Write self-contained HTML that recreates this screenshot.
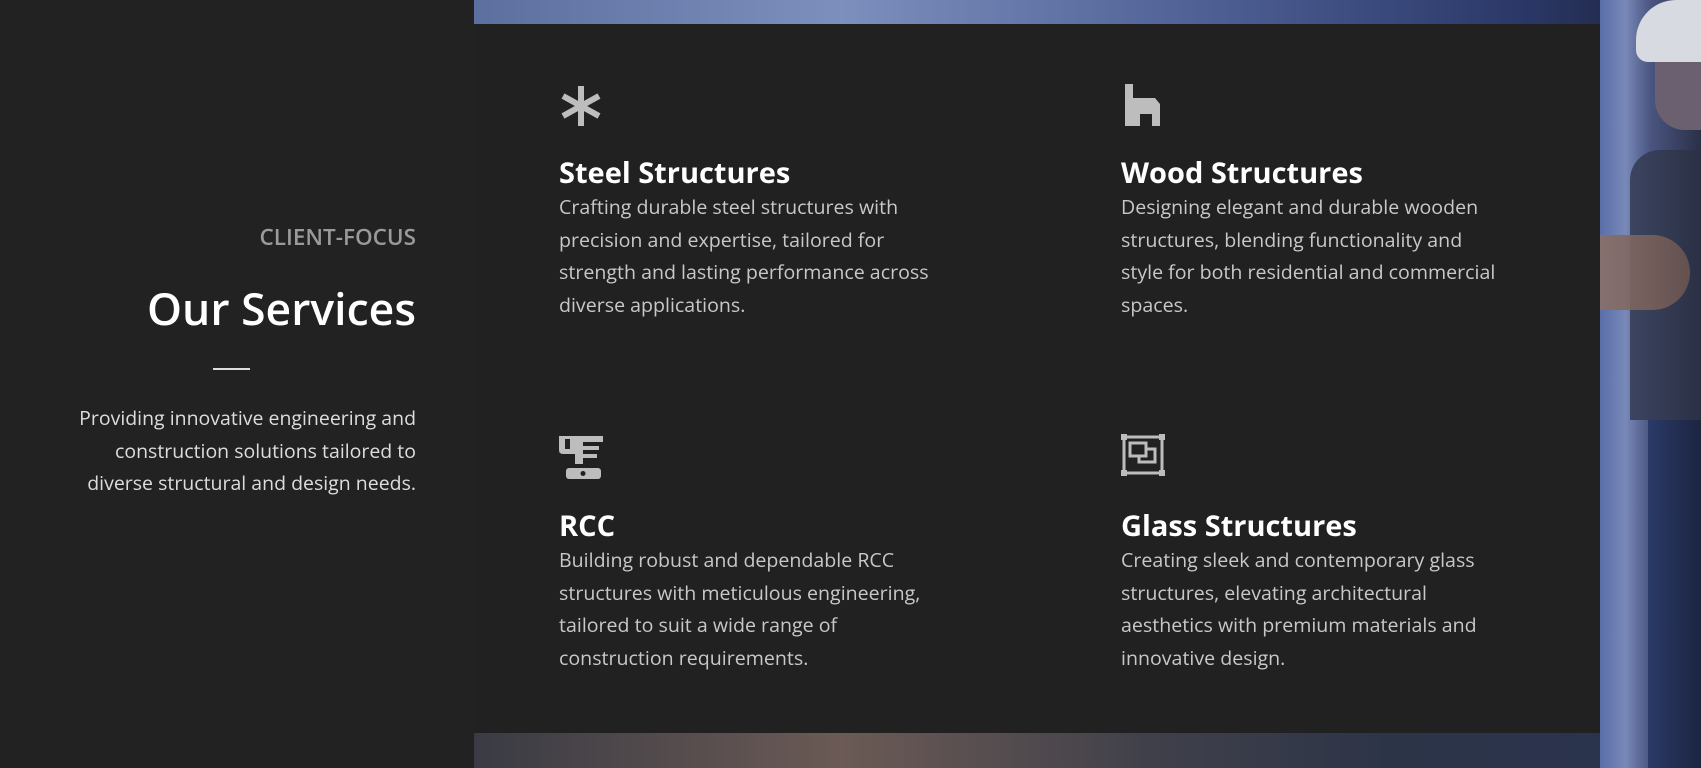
<!DOCTYPE html>
<html><head><meta charset="utf-8"><style>
*{margin:0;padding:0;box-sizing:border-box}
body{width:1701px;height:768px;overflow:hidden;background:#222;font-family:"Open Sans","Liberation Sans",sans-serif;position:relative}
.photo{position:absolute;left:474px;top:0;width:1227px;height:768px;
background:linear-gradient(90deg,#5c6f9e 0%,#7d8fbd 30%,#4e5f94 60%,#2b3868 85%,#1c2238 100%)}
.photo .b{position:absolute;left:0;top:733px;width:100%;height:35px;background:linear-gradient(90deg,#3a3b44,#6b5a55 30%,#40404a 55%,#2c3448 75%,#2a3350)}
.r{position:absolute;left:1600px;top:0;width:101px;height:768px;background:linear-gradient(90deg,#5a6ea8 0%,#7888b8 25%,#4a5580 50%,#2a3048 100%)}
.shirt{position:absolute;left:1630px;top:150px;width:71px;height:270px;background:linear-gradient(90deg,#3c4460,#2a3044);border-radius:30px 0 0 0}
.arm{position:absolute;left:1600px;top:235px;width:90px;height:75px;background:linear-gradient(90deg,#8a7068,#6a5450);border-radius:0 40px 40px 0;opacity:.9}
.jeans{position:absolute;left:1648px;top:420px;width:53px;height:348px;background:linear-gradient(90deg,#2a3a68,#1c2440)}
.head{position:absolute;left:1655px;top:40px;width:46px;height:90px;background:#6a6070;border-radius:20px 0 0 30px}
.helmet{position:absolute;left:1636px;top:0;width:65px;height:62px;background:#d8dae2;border-radius:40px 0 0 12px}
.panel{position:absolute;left:474px;top:24px;width:1126px;height:709px;background:#212121}
.left{position:absolute;right:1285px;text-align:right}
.cf{top:221px;font-size:22.5px;color:#9a9a9a;font-weight:600}
.os{top:278px;font-size:44.5px;color:#fff;font-weight:600;white-space:nowrap}
.ln{position:absolute;left:213px;top:368px;width:37px;height:2px;background:#ddd}
.lp{top:402px;width:360px;font-size:19.5px;line-height:32.5px;color:#ddd}
.card{position:absolute;width:376px}
.card svg{display:block;margin-bottom:27px}
.card h3{font-size:29px;color:#fff;font-weight:700;line-height:36px}
.card p{font-size:19.6px;line-height:32.6px;color:#c8c8c8}
.r2 svg{margin-bottom:32px}
.r2 svg.t{margin-bottom:28px}
</style></head><body>
<div class="photo"><div class="b"></div></div>
<div class="r"></div><div class="head"></div><div class="shirt"></div><div class="arm"></div><div class="jeans"></div><div class="helmet"></div>
<div class="panel"></div>
<div class="left cf">CLIENT-FOCUS</div>
<div class="left os">Our Services</div>
<div class="ln"></div>
<div class="left lp">Providing innovative engineering and construction solutions tailored to diverse structural and design needs.</div>

<div class="card" style="left:559px;top:84px">
<svg width="44" height="44" viewBox="0 0 44 44"><g stroke="#bdbdbd" stroke-width="6"><line x1="22" y1="2" x2="22" y2="42"/><line x1="4" y1="12" x2="40" y2="32"/><line x1="4" y1="32" x2="40" y2="12"/></g></svg>
<h3>Steel Structures</h3>
<p>Crafting durable steel structures with precision and expertise, tailored for strength and lasting performance across diverse applications.</p></div>

<div class="card" style="left:1121px;top:84px">
<svg width="44" height="44" viewBox="0 0 44 44"><path d="M4 0h8v14h22l5 6v22h-8V30h-12v12H4z" fill="#bdbdbd"/></svg>
<h3>Wood Structures</h3>
<p>Designing elegant and durable wooden structures, blending functionality and style for both residential and commercial spaces.</p></div>

<div class="card r2" style="left:559px;top:434px">
<svg class="t" width="44" height="46" viewBox="0 0 44 46"><path d="M0 2h44v6h-20v4h16v4h-16v4h14v4h-14v6h-8V20H4q-4 0-4-4z" fill="#bdbdbd"/><rect x="6" y="5" width="5" height="10" fill="#212121"/><rect x="7" y="34" width="35" height="11" rx="3" fill="#bdbdbd"/><circle cx="24" cy="39.5" r="2.5" fill="#212121"/></svg>
<h3>RCC</h3>
<p>Building robust and dependable RCC structures with meticulous engineering, tailored to suit a wide range of construction requirements.</p></div>

<div class="card r2" style="left:1121px;top:434px">
<svg width="44" height="42" viewBox="0 0 44 42" fill="none" stroke="#bdbdbd" stroke-width="3"><rect x="3" y="3" width="38" height="36"/><rect x="9" y="9" width="16" height="13"/><path d="M25 15h9v13H18v-6"/><g fill="#bdbdbd" stroke="none"><rect x="0" y="0" width="6" height="6"/><rect x="38" y="0" width="6" height="6"/><rect x="0" y="36" width="6" height="6"/><rect x="38" y="36" width="6" height="6"/></g></svg>
<h3>Glass Structures</h3>
<p>Creating sleek and contemporary glass structures, elevating architectural aesthetics with premium materials and innovative design.</p></div>
</body></html>
